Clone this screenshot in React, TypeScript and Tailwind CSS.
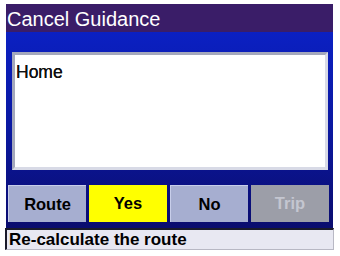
export default function App() {
  return (
    <div className="w-[340px] h-[256px] bg-white relative overflow-hidden" style={{ fontFamily: '"Liberation Sans", Arial, sans-serif' }}>
      <div className="ml-[6px] mt-[4px] w-[327px]">
        <div className="h-[28px] bg-[#3a1d68] flex items-center pl-[1px] pt-[2px]">
          <span className="text-white text-[20px] leading-none">Cancel Guidance</span>
        </div>
        <div className="h-[196px] bg-gradient-to-b from-[#0b20c2] via-[#0a18a0] to-[#0a0c6e] flex flex-col">
          <div className="mt-[20px] ml-[6px] mr-[5px] h-[118px] bg-white border-[3px] border-t-[#a4a8bc] border-l-[#a4a8bc] border-r-[#d8dae6] border-b-[#d8dae6] pt-[6px] pl-[1px]">
            <span className="text-[#111] text-[17.5px] leading-none [text-shadow:0_0_0.4px_#000]">Home</span>
          </div>
          <div className="mt-[15px] ml-[2px] mr-[4px] grid grid-cols-4 gap-[3px] h-[37px]">
            <div className="bg-[#a6aed0] border-t border-l border-t-[#c8ceea] border-l-[#c8ceea] flex items-center justify-center text-[16.5px] font-bold text-black">Route</div>
            <div className="bg-[#ffff00] flex items-center justify-center text-[16.5px] font-bold text-black">Yes</div>
            <div className="bg-[#a6aed0] border-t border-l border-t-[#c8ceea] border-l-[#c8ceea] flex items-center justify-center text-[16.5px] font-bold text-black">No</div>
            <div className="bg-[#9c9ea8] flex items-center justify-center text-[16.5px] font-bold text-[#c4c6d0]">Trip</div>
          </div>
        </div>
      </div>
      <div className="ml-[5px] w-[329px] h-[22px] bg-[#e8e8f2] border-t-2 border-l-2 border-t-[#1a1a2a] border-l-[#1a1a2a] border-r border-b border-r-[#b8b8c4] border-b-[#b8b8c4] flex items-center pl-[2px]">
        <span className="text-black text-[17px] font-bold leading-none">Re-calculate the route</span>
      </div>
    </div>
  );
}
